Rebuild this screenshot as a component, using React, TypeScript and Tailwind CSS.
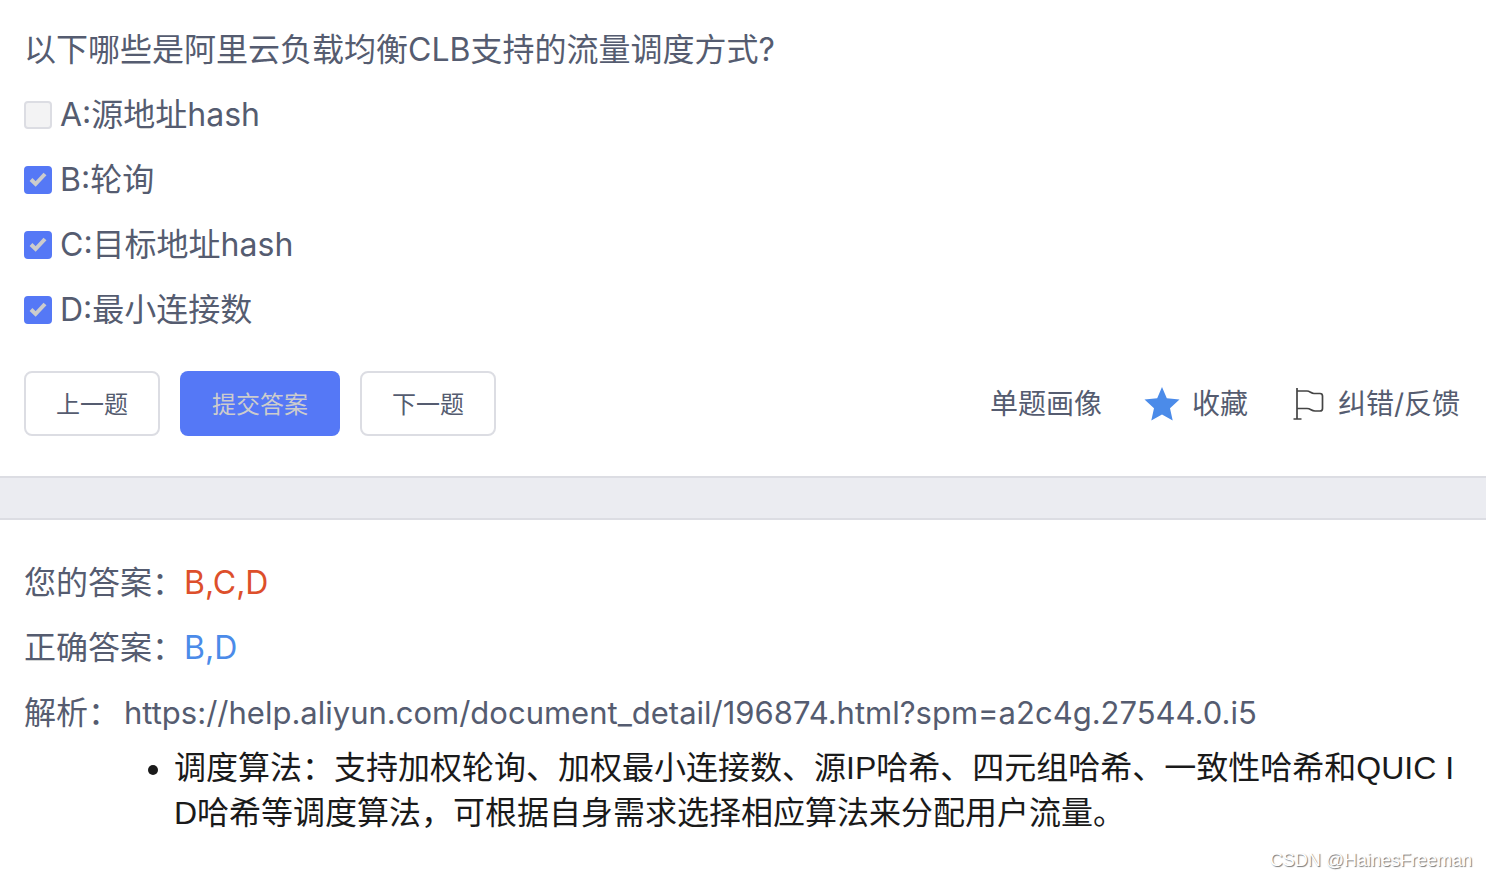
import { useState } from 'react';

interface Option {
  key: string;
  text: string;
}

const options: Option[] = [
  { key: 'A', text: '源地址hash' },
  { key: 'B', text: '轮询' },
  { key: 'C', text: '目标地址hash' },
  { key: 'D', text: '最小连接数' },
];

const docUrl = 'https://help.aliyun.com/document_detail/196874.html?spm=a2c4g.27544.0.i5';

function OptionRow({ option, checked }: { option: Option; checked: boolean }) {
  return (
    <label className="flex items-center gap-2 leading-[65px]">
      <span className="grid shrink-0 place-items-center">
        <input type="checkbox" name="answer" value={option.key} checked={checked} disabled readOnly
          className="col-start-1 row-start-1 size-7 appearance-none rounded-sm border-2 border-[#dcdde3] bg-[#f3f3f4] checked:border-[#5578f6] checked:bg-[#5578f6]" />
        {checked && (
          <svg viewBox="0 0 28 28" className="pointer-events-none col-start-1 row-start-1 size-7" fill="none" stroke="#cccccc" strokeWidth="4">
            <path d="M7 13.500 L11.600 18 L21 8" />
          </svg>
        )}
      </span>
      <span>{option.key}:{option.text}</span>
    </label>
  );
}

export default function App() {
  const [selected] = useState<string[]>(['B', 'C', 'D']);
  const correct = ['B', 'D'];

  return (
    <div className="relative min-h-screen bg-white font-['Inter','Noto_Sans_CJK_SC',sans-serif] text-[32px] text-[#555c70]">
      <section className="px-6 pt-[17px] pb-10">
        <h1 className="leading-[65px]">以下哪些是阿里云负载均衡CLB支持的流量调度方式?</h1>
        {options.map(o => (
          <OptionRow key={o.key} option={o} checked={selected.includes(o.key)} />
        ))}

        <div className="mt-[29px] flex items-center justify-between">
          <div className="flex gap-5 text-2xl">
            <button type="button" className="h-[65px] rounded-lg border-2 border-[#dcdde3] px-[30px] pt-0.5">上一题</button>
            <button type="button" disabled className="h-[65px] rounded-lg bg-[#5578f6] px-8 pt-0.5 text-[#cccccc]">提交答案</button>
            <button type="button" className="h-[65px] rounded-lg border-2 border-[#dcdde3] px-[30px] pt-0.5">下一题</button>
          </div>
          <div className="flex items-center gap-[42px] pr-0.5 text-[28px]">
            <button type="button">单题画像</button>
            <button type="button" className="flex items-center gap-3">
              <svg viewBox="0 0 36 36" className="size-9" fill="#4b8be9">
                <path d="M18 1 L22.8 12.2 L35.5 13.5 L26 22.2 L28.7 34.5 L18 28.5 L7.3 34.5 L10 22.2 L0.5 13.5 L13.2 12.2 Z" />
              </svg>
              收藏
            </button>
            <button type="button" className="flex items-center gap-3">
              <svg viewBox="0 0 36 36" className="size-9" fill="none" stroke="#444444" strokeWidth="1.7">
                <path d="M7 2 V33 M3.500 33 H11.500 M7 5 H17 C20 5 21 7.500 24 7.500 H30 Q32.500 7.500 32.500 10 V22.500 Q32.500 25 30 25 H25 C21 25 21 22.500 17 22.500 H7" />
              </svg>
              纠错/反馈
            </button>
          </div>
        </div>
      </section>

      <div className="h-11 border-y-2 border-[#dcdde3] bg-[#ebecf1]" />

      <section className="px-6 pt-[30px] pb-10">
        <p className="leading-[65px]">您的答案：<span className="text-[#dd4f2b]">{selected.join(',')}</span></p>
        <p className="leading-[65px]">正确答案：<span className="text-[#4b8be9]">{correct.join(',')}</span></p>
        <p className="leading-[65px]">解析：<a href={docUrl} className="ml-1 text-[31px]">{docUrl}</a></p>
        <ul className="mt-px list-disc pl-[150px] font-['Liberation_Sans','Noto_Sans_CJK_SC',sans-serif] leading-[45px] break-all text-[#1a1a1a]">
          <li>调度算法：支持加权轮询、加权最小连接数、源IP哈希、四元组哈希、一致性哈希和QUIC ID哈希等调度算法，可根据自身需求选择相应算法来分配用户流量。</li>
        </ul>
      </section>

      <span className="absolute right-3.5 bottom-0.5 font-['Liberation_Sans',sans-serif] text-lg text-white [text-shadow:1px_1px_1px_#777]">CSDN @HainesFreeman</span>
    </div>
  );
}
